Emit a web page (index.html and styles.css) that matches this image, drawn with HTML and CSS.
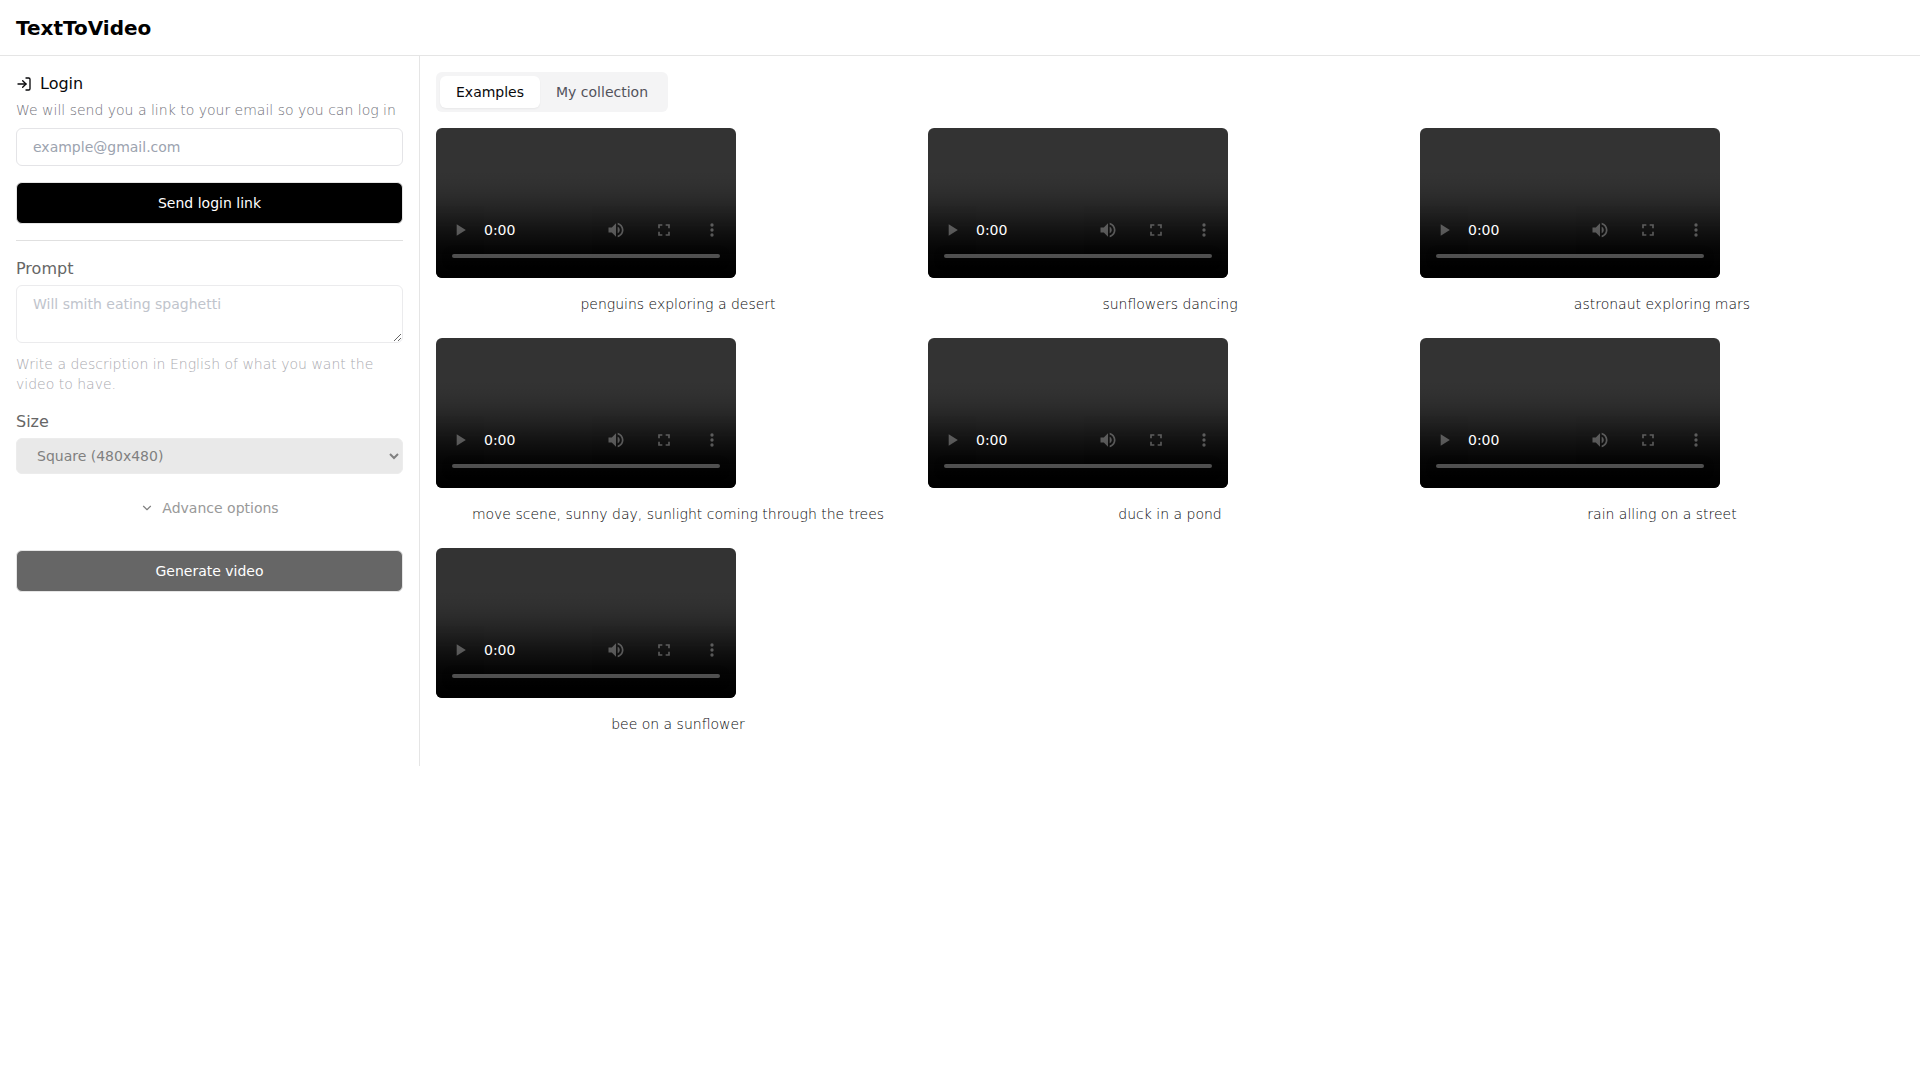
FILE: index.html
```
<!DOCTYPE html>
<html lang="en">
<head>
<meta charset="UTF-8" />
<meta name="viewport" content="width=device-width, initial-scale=1" />
<title>TextToVideo</title>
<link rel="stylesheet" href="styles.css">
</head>
<body>
    <header class="header">
        <h1>TextToVideo</h1>
    </header>
    <div class="layout">
        <aside class="sidebar">
            <form class="login">
                <label class="login__title" for="email">
                    <svg width="16" height="16" viewBox="0 0 24 24" fill="none" stroke="currentColor" stroke-width="2" stroke-linecap="round" stroke-linejoin="round" aria-hidden="true">
                        <path d="M15 3h4a2 2 0 0 1 2 2v14a2 2 0 0 1-2 2h-4"></path>
                        <path d="M10 17l5-5-5-5"></path>
                        <path d="M15 12H3"></path>
                    </svg>
                    Login
                </label>
                <p class="hint">We will send you a link to your email so you can log in</p>
                <input class="field" type="email" id="email" placeholder="example@gmail.com">
                <button class="button" type="button">Send login link</button>
            </form>
            <hr>
            <form class="generate">
                <label for="prompt">Prompt</label>
                <textarea class="field" id="prompt" rows="2" placeholder="Will smith eating spaghetti" disabled></textarea>
                <p class="hint">Write a description in English of what you want the video to have.</p>
                <label for="size">Size</label>
                <select id="size" disabled>
                    <option>Square (480x480)</option>
                </select>
                <button class="advance" type="button" disabled>
                    <svg width="14" height="14" viewBox="0 0 24 24" fill="none" stroke="currentColor" stroke-width="2" stroke-linecap="round" stroke-linejoin="round" aria-hidden="true">
                        <path d="M6 9l6 6 6-6"></path>
                    </svg>
                    Advance options
                </button>
                <button class="button" type="button" disabled>Generate video</button>
            </form>
        </aside>
        <main class="content">
            <div class="tabs" role="tablist">
                <button class="tab tab--active" role="tab" aria-selected="true">Examples</button>
                <button class="tab" role="tab" aria-selected="false">My collection</button>
            </div>
            <div class="videos">
                <figure>
                    <video controls></video>
                    <figcaption>penguins exploring a desert</figcaption>
                </figure>
                <figure>
                    <video controls></video>
                    <figcaption>sunflowers dancing</figcaption>
                </figure>
                <figure>
                    <video controls></video>
                    <figcaption>astronaut exploring mars</figcaption>
                </figure>
                <figure>
                    <video controls></video>
                    <figcaption>move scene, sunny day, sunlight coming through the trees</figcaption>
                </figure>
                <figure>
                    <video controls></video>
                    <figcaption>duck in a pond</figcaption>
                </figure>
                <figure>
                    <video controls></video>
                    <figcaption>rain alling on a street</figcaption>
                </figure>
                <figure>
                    <video controls></video>
                    <figcaption>bee on a sunflower</figcaption>
                </figure>
            </div>
        </main>
    </div>
</body>
</html>
```

FILE: styles.css
```
* {
    box-sizing: border-box;
    margin: 0;
    padding: 0;
}
body {
    font-family: "DejaVu Sans", sans-serif;
    font-size: 16px;
    line-height: 24px;
    color: #09090b;
    background-color: white;
}
button,
input,
textarea,
select {
    font: inherit;
    font-size: 14px;
    line-height: 20px;
}
.header {
    padding: 14px 16px 13px;
    border-bottom: 1px solid #e5e5e5;
}
.header h1 {
    font-size: 20px;
    line-height: 28px;
    color: black;
}
.layout {
    display: grid;
    grid-template-columns: 420px 1fr;
}
.sidebar {
    padding: 16px;
    border-right: 1px solid #e5e5e5;
}
.sidebar form {
    display: flex;
    flex-direction: column;
}
.login__title {
    display: flex;
    align-items: center;
    gap: 8px;
    margin-bottom: 4px;
}
.hint {
    font-size: 14px;
    line-height: 20px;
    font-weight: 200;
    color: #71717a;
}
.field {
    width: 100%;
    padding: 8px 16px;
    border: 1px solid #e4e4e7;
    border-radius: 6px;
    background-color: white;
}
.field::placeholder {
    color: #9ca3af;
}
.login .field {
    margin: 8px 0 16px;
}
.button {
    width: 100%;
    padding: 10px 16px;
    border: 1px solid #e5e5e5;
    border-radius: 6px;
    background-color: black;
    color: white;
}
hr {
    margin: 16px 0;
    border: none;
    border-top: 1px solid #e0e0e0;
}
.generate {
    color: #666;
}
.generate label {
    margin-bottom: 4px;
}
.generate .field {
    border-color: #ebebed;
}
.generate .field::placeholder {
    color: #c0c4cc;
}
.generate .hint {
    margin: 11px 0 16px;
    color: #aaaaaf;
}
.generate select {
    width: 100%;
    height: 36px;
    padding: 0 16px;
    border: 1px solid #ececec;
    border-radius: 6px;
    background-color: #e9e9e9;
    color: #808080;
    opacity: 1;
}
.advance {
    display: flex;
    align-items: center;
    justify-content: center;
    gap: 8px;
    margin: 16px 0 24px;
    padding: 8px 16px;
    border: none;
    background: none;
    color: #999;
}
.advance svg {
    color: #808080;
}
.generate .button {
    background-color: #666;
}
.content {
    padding: 16px;
}
.tabs {
    display: inline-flex;
    padding: 4px;
    border-radius: 6px;
    background-color: #f4f4f5;
    vertical-align: top;
}
.tab {
    padding: 6px 16px;
    border: none;
    border-radius: 6px;
    background: none;
    color: #52525b;
}
.tab--active {
    background-color: white;
    color: #09090b;
    box-shadow: 0 1px 2px rgba(0, 0, 0, 0.05);
}
.videos {
    display: grid;
    grid-template-columns: repeat(3, 1fr);
    gap: 8px;
    margin-top: 16px;
}
.videos video {
    display: block;
    max-width: 100%;
    border-radius: 6px;
}
.videos video::-webkit-media-controls-current-time-display {
    font-family: "DejaVu Sans", sans-serif;
}
.videos figcaption {
    padding: 16px;
    font-size: 14px;
    line-height: 20px;
    font-weight: 200;
    text-align: center;
}
```
